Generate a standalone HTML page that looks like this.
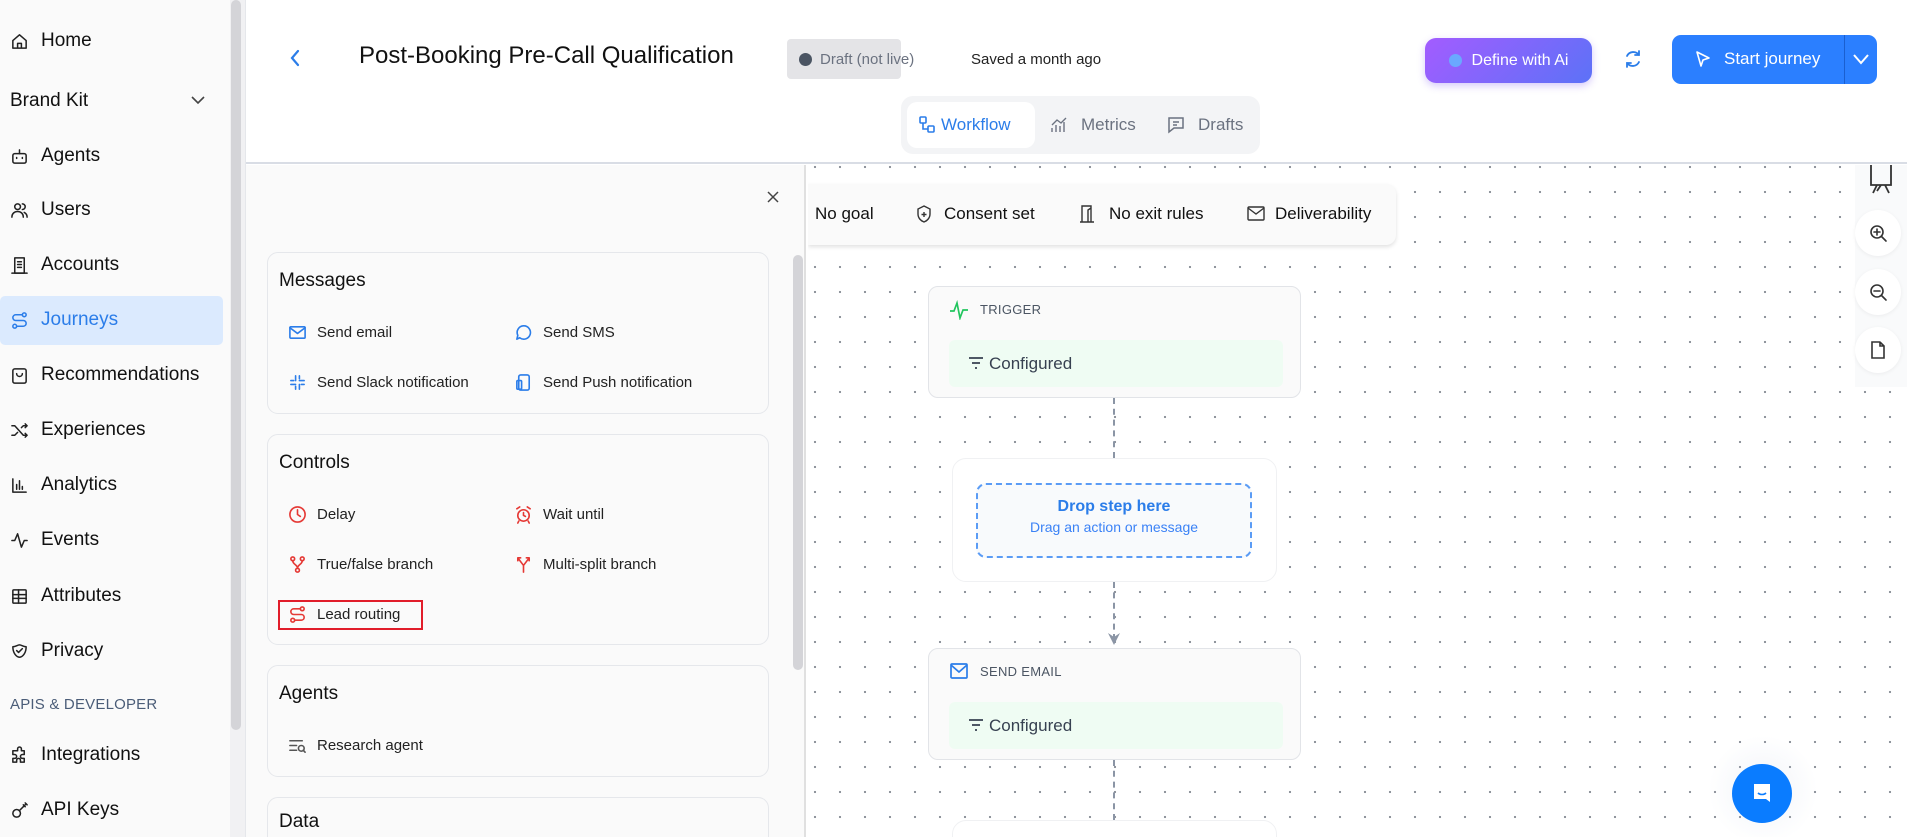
<!DOCTYPE html>
<html><head><meta charset="utf-8">
<style>
*{box-sizing:border-box;margin:0;padding:0}
html{width:1907px;height:837px;overflow:hidden}
body{width:1907px;height:837px;overflow:hidden;position:relative;font-family:"Liberation Sans",sans-serif;background:#fff;color:#111}
.abs{position:absolute}
#side{left:0;top:0;width:231px;height:837px;background:#fafafa}
.nav{position:absolute;left:10px;font-size:19px;color:#111;display:flex;align-items:center;gap:12px;height:24px}
.nav svg{width:19px;height:19px;fill:none;stroke:#222;stroke-width:1.6;stroke-linecap:round;stroke-linejoin:round}
#sb{left:231px;top:0;width:10px;height:730px;background:#d4d4d8;border-radius:5px}
#sbtrack{left:230px;top:0;width:16px;height:837px;background:#f1f1f3;border-right:1px solid #e5e7eb}
#header{left:246px;top:0;width:1661px;height:164px;background:#fff;border-bottom:2px solid #d9dde5}
#panel{left:246px;top:165px;width:560px;height:672px;background:#fafafa;border-right:2px solid #e0e0e0;overflow:hidden}
.card{position:absolute;left:21px;width:502px;border:1.5px solid #e5e7eb;border-radius:11px;background:#fafafa}
.card h3{position:absolute;left:11px;font-size:19px;font-weight:500;color:#111}
.it{position:absolute;font-size:15px;color:#222;display:flex;align-items:center;gap:10px;white-space:nowrap}
.it svg{width:19px;height:19px;fill:none;stroke-width:1.7;stroke-linecap:round;stroke-linejoin:round}
#canvas{left:808px;top:165px;width:1099px;height:672px;overflow:hidden;background-color:#fff;background-image:radial-gradient(circle,#8a8f98 1px,transparent 1.3px);background-size:25px 25px;background-position:-5.5px 14.5px}
.node{position:absolute;left:120px;width:373px;height:112px;background:#fafafa;border:1.5px solid #e2e4e8;border-radius:10px}
.node .lbl{position:absolute;left:51px;top:15px;font-size:13px;color:#4b5563;letter-spacing:.3px}
.node .cfg{position:absolute;left:20px;top:53px;width:334px;height:47px;background:#effcf3;border-radius:6px;font-size:17px;color:#374151;display:flex;align-items:center;padding-left:40px}
.dash{position:absolute;left:305px;width:0;border-left:2px dashed #8b95a5}
.rc{position:absolute;left:1047px;width:46px;height:46px;border-radius:50%;background:#fff;box-shadow:0 1px 4px rgba(0,0,0,.06);display:flex;align-items:center;justify-content:center}
.rc svg{width:20px;height:20px;fill:none;stroke:#333;stroke-width:1.6;stroke-linecap:round}
</style></head><body>

<div id="side" class="abs">
  <div class="nav" style="top:29px"><svg viewBox="0 0 20 20"><path d="M3 9l7-6 7 6v8H3z M8 17v-5h4v5"/></svg>Home</div>
  <div class="nav" style="top:89px;left:10px;font-weight:500">Brand Kit</div>
  <svg class="abs" style="left:190px;top:94px" width="16" height="12" viewBox="0 0 16 12"><path d="M2 3l6 6 6-6" fill="none" stroke="#444" stroke-width="1.6"/></svg>
  <div class="nav" style="top:144px"><svg viewBox="0 0 20 20"><rect x="3" y="7" width="14" height="10" rx="2"/><path d="M10 3v4 M7 11v1 M13 11v1"/></svg>Agents</div>
  <div class="nav" style="top:198px"><svg viewBox="0 0 20 20"><circle cx="8" cy="6" r="3"/><path d="M2 17c0-4 3-6 6-6s6 2 6 6 M13 3a3 3 0 010 6 M15 12c2 1 3 3 3 5"/></svg>Users</div>
  <div class="nav" style="top:253px"><svg viewBox="0 0 20 20"><rect x="5" y="2" width="10" height="16"/><path d="M2 18h16 M8 6h4 M8 9h4 M8 12h4"/></svg>Accounts</div>
  <div class="abs" style="left:0;top:296px;width:223px;height:49px;background:#dbeafe;border-radius:5px"></div>
  <div class="nav" style="top:308px;color:#2b7de9"><svg viewBox="0 0 20 20" style="stroke:#2b7de9"><circle cx="15" cy="4" r="2"/><circle cx="5" cy="16" r="2"/><path d="M13 4H6a3 3 0 000 6h8a3 3 0 010 6H7"/></svg>Journeys</div>
  <div class="nav" style="top:363px"><svg viewBox="0 0 20 20"><rect x="3" y="3" width="14" height="15" rx="2"/><path d="M7 8c0 4 6 4 6 0"/></svg>Recommendations</div>
  <div class="nav" style="top:418px"><svg viewBox="0 0 20 20"><path d="M2 5h3l9 10h4 M2 15h3l3-3 M12 7l2-2h4 M16 3l2 2-2 2 M16 13l2 2-2 2"/></svg>Experiences</div>
  <div class="nav" style="top:473px"><svg viewBox="0 0 20 20"><path d="M3 3v14h14 M7 14V9 M10 14V5 M13 14v-3"/></svg>Analytics</div>
  <div class="nav" style="top:528px"><svg viewBox="0 0 20 20"><path d="M2 10h3l3-7 4 14 3-7h3"/></svg>Events</div>
  <div class="nav" style="top:584px"><svg viewBox="0 0 20 20"><rect x="3" y="3" width="14" height="14" rx="1"/><path d="M3 8h14 M3 12h14 M9 3v14"/></svg>Attributes</div>
  <div class="nav" style="top:639px"><svg viewBox="0 0 20 20"><path d="M3 5c3 0 5-2 7-2s4 2 7 2c0 7-4 11-7 11S3 12 3 5z M7 9l2 2 4-4"/></svg>Privacy</div>
  <div class="abs" style="left:10px;top:696px;font-size:15px;color:#4b5d78;letter-spacing:.2px">APIS &amp; DEVELOPER</div>
  <div class="nav" style="top:743px"><svg viewBox="0 0 20 20"><path d="M8 3a2 2 0 014 0v2h3v4h-2a2 2 0 000 4h2v4h-4v-2a2 2 0 00-4 0v2H3v-4h2a2 2 0 000-4H3V5h5z"/></svg>Integrations</div>
  <div class="nav" style="top:798px"><svg viewBox="0 0 20 20"><circle cx="7" cy="13" r="4"/><path d="M10 10l6-6 M14 4l2 2 M16 2l2 2"/></svg>API Keys</div>
</div>
<div id="sbtrack" class="abs"></div>
<div id="sb" class="abs"></div>

<div id="header" class="abs">
  <svg class="abs" style="left:42px;top:48px" width="14" height="20" viewBox="0 0 14 20"><path d="M10 3L4 10l6 7" fill="none" stroke="#2b7de9" stroke-width="2.2" stroke-linecap="round"/></svg>
  <div class="abs" style="left:113px;top:42px;font-size:24px;font-weight:500;color:#111;white-space:nowrap">Post-Booking Pre-Call Qualification</div>
  <div class="abs" style="left:541px;top:39px;width:114px;height:40px;background:#e4e4e7;border-radius:4px;display:flex;align-items:center;padding-left:12px;gap:8px;font-size:15px;color:#6b7280;white-space:nowrap"><span style="width:13px;height:13px;border-radius:50%;background:#4b5563;display:inline-block;flex:none"></span>Draft (not live)</div>
  <div class="abs" style="left:725px;top:51px;font-size:15px;color:#222;white-space:nowrap">Saved a month ago</div>
  <div class="abs" style="left:1179px;top:38px;width:167px;height:45px;border-radius:11px;background:linear-gradient(135deg,#a35cff,#5c72f7);box-shadow:0 3px 8px rgba(120,80,240,.3);display:flex;align-items:center;justify-content:center;gap:10px;color:#fff;font-size:16px;font-weight:500;white-space:nowrap"><span style="width:13px;height:13px;border-radius:50%;background:#6aa8ff;display:inline-block"></span>Define with Ai</div>
  <svg class="abs" style="left:1377px;top:48px" width="20" height="22" viewBox="0 0 20 22"><path d="M16 7a7 7 0 00-12 1 M4 15a7 7 0 0012-1 M16 3v4h-4 M4 19v-4h4" fill="none" stroke="#2b7de9" stroke-width="1.8" stroke-linecap="round"/></svg>
  <div class="abs" style="left:1426px;top:35px;width:205px;height:49px;border-radius:9px;background:#2b7fff;color:#fff;font-size:17px;font-weight:500">
    <svg class="abs" style="left:22px;top:15px" width="18" height="19" viewBox="0 0 18 19"><path d="M3 2l12 6-6 2-2 6z" fill="none" stroke="#fff" stroke-width="1.6" stroke-linejoin="round"/></svg>
    <span class="abs" style="left:52px;top:14px;white-space:nowrap">Start journey</span>
    <div class="abs" style="left:172px;top:0;width:1px;height:49px;background:#1a5fd0"></div>
    <svg class="abs" style="left:180px;top:18px" width="18" height="13" viewBox="0 0 18 13"><path d="M2 2l7 8 7-8" fill="none" stroke="#fff" stroke-width="2"/></svg>
  </div>
  <div class="abs" style="left:655px;top:96px;width:359px;height:58px;background:#f3f4f6;border-radius:12px"></div>
  <div class="abs" style="left:661px;top:102px;width:128px;height:46px;background:#fff;border-radius:10px"></div>
  <svg class="abs" style="left:672px;top:115px" width="18" height="20" viewBox="0 0 18 20"><rect x="2" y="2" width="6" height="6" rx="1" fill="none" stroke="#2b7de9" stroke-width="1.6"/><rect x="10" y="11" width="6" height="6" rx="1" fill="none" stroke="#2b7de9" stroke-width="1.6"/><path d="M5 8v6h5" fill="none" stroke="#2b7de9" stroke-width="1.6"/></svg>
  <div class="abs" style="left:695px;top:115px;font-size:17px;color:#2b7de9">Workflow</div>
  <svg class="abs" style="left:804px;top:116px" width="18" height="18" viewBox="0 0 18 18"><path d="M2 16V12 M6 16V9 M10 16V10 M14 16V6 M2 9l5-5 4 3 5-5" fill="none" stroke="#6b7280" stroke-width="1.4"/></svg>
  <div class="abs" style="left:835px;top:115px;font-size:17px;color:#6b7280">Metrics</div>
  <svg class="abs" style="left:921px;top:116px" width="18" height="18" viewBox="0 0 18 18"><path d="M2 2h14v10H7l-5 4z M6 6h6 M6 9h4" fill="none" stroke="#6b7280" stroke-width="1.5"/></svg>
  <div class="abs" style="left:952px;top:115px;font-size:17px;color:#6b7280">Drafts</div>
</div>

<div id="panel" class="abs">
  <svg class="abs" style="left:520px;top:25px" width="14" height="14" viewBox="0 0 14 14"><path d="M2 2l10 10M12 2L2 12" stroke="#444" stroke-width="1.5"/></svg>
  <div class="abs" style="left:547px;top:90px;width:10px;height:415px;background:#d4d4d8;border-radius:5px"></div>
  <div class="card" style="top:87px;height:162px"><h3 style="top:17px">Messages</h3>
    <div class="it" style="left:20px;top:70px"><svg viewBox="0 0 20 20" stroke="#2b7de9"><rect x="2" y="4" width="16" height="12" rx="1"/><path d="M2 5l8 6 8-6"/></svg>Send email</div>
    <div class="it" style="left:246px;top:70px"><svg viewBox="0 0 20 20" stroke="#2b7de9"><path d="M10 3a7 7 0 11-4 12.5L3 17l1-4A7 7 0 0110 3z"/></svg>Send SMS</div>
    <div class="it" style="left:20px;top:120px"><svg viewBox="0 0 20 20" stroke="#2b7de9" stroke-width="2.4"><path d="M8 3v5 M12 12v5 M3 12h5 M12 8h5 M12 3v3 M8 14v3 M3 8h3 M14 12h3"/></svg>Send Slack notification</div>
    <div class="it" style="left:246px;top:120px"><svg viewBox="0 0 20 20" stroke="#2b7de9"><rect x="5" y="2" width="11" height="16" rx="2"/><rect x="3" y="8" width="5" height="9" rx="1"/></svg>Send Push notification</div>
  </div>
  <div class="card" style="top:269px;height:211px"><h3 style="top:17px">Controls</h3>
    <div class="it" style="left:20px;top:70px"><svg viewBox="0 0 20 20" stroke="#e53935"><circle cx="10" cy="10" r="8"/><path d="M10 5v5l3 2"/></svg>Delay</div>
    <div class="it" style="left:246px;top:70px"><svg viewBox="0 0 20 20" stroke="#e53935"><circle cx="10" cy="11" r="6"/><path d="M10 8v3l2 1 M3 4l3-2 M17 4l-3-2 M5 17l-1 2 M15 17l1 2"/></svg>Wait until</div>
    <div class="it" style="left:20px;top:120px"><svg viewBox="0 0 20 20" stroke="#e53935"><circle cx="5" cy="4" r="2"/><circle cx="15" cy="4" r="2"/><circle cx="10" cy="16" r="2"/><path d="M5 6c0 4 5 4 5 8 M15 6c0 4-5 4-5 8"/></svg>True/false branch</div>
    <div class="it" style="left:246px;top:120px"><svg viewBox="0 0 20 20" stroke="#e53935"><path d="M10 18v-7L4 3 M10 11l6-8 M4 3h3 M4 3v3 M16 3h-3 M16 3v3"/></svg>Multi-split branch</div>
    <div class="abs" style="left:10px;top:165px;width:145px;height:30px;border:2px solid #e11d2a"></div>
    <div class="it" style="left:20px;top:170px"><svg viewBox="0 0 20 20" stroke="#e53935"><circle cx="15" cy="4" r="2"/><circle cx="5" cy="16" r="2"/><path d="M13 4H6a3 3 0 000 6h8a3 3 0 010 6H7"/></svg>Lead routing</div>
  </div>
  <div class="card" style="top:500px;height:112px"><h3 style="top:17px">Agents</h3>
    <div class="it" style="left:20px;top:70px"><svg viewBox="0 0 20 20" stroke="#555"><path d="M2 5h13 M2 10h7 M2 15h7"/><circle cx="14" cy="13" r="3"/><path d="M16 15l2 2"/></svg>Research agent</div>
  </div>
  <div class="card" style="top:632px;height:60px"><h3 style="top:13px">Data</h3></div>
</div>

<div id="canvas" class="abs">
  <div class="abs" style="left:0;top:19px;width:588px;height:61px;background:#fafafa;border-radius:0 10px 10px 0;box-shadow:0 2px 4px rgba(0,0,0,.12);font-size:17px;color:#111;white-space:nowrap">
    <span class="abs" style="left:7px;top:20px">No goal</span>
    <svg class="abs" style="left:108px;top:20px" width="16" height="20" viewBox="0 0 16 20"><path d="M8 2l6 3v5c0 4-3 7-6 8-3-1-6-4-6-8V5z M8 8v5 M5.5 10.5h5" fill="none" stroke="#333" stroke-width="1.4"/></svg>
    <span class="abs" style="left:136px;top:20px">Consent set</span>
    <svg class="abs" style="left:270px;top:20px" width="18" height="20" viewBox="0 0 18 20"><path d="M4 18V2h9v16 M2 18h14 M10 9v2 M13 4l-3 2v12" fill="none" stroke="#333" stroke-width="1.4"/></svg>
    <span class="abs" style="left:301px;top:20px">No exit rules</span>
    <svg class="abs" style="left:438px;top:21px" width="20" height="18" viewBox="0 0 20 18"><rect x="2" y="2" width="16" height="13" rx="1" fill="none" stroke="#333" stroke-width="1.4"/><path d="M2 3l8 6 8-6" fill="none" stroke="#333" stroke-width="1.4"/></svg>
    <span class="abs" style="left:467px;top:20px">Deliverability</span>
  </div>
  <div class="abs" style="left:1047px;top:0;width:52px;height:222px;background:#f9fafb"></div>
  <svg class="abs" style="left:1060px;top:0" width="26" height="30" viewBox="0 0 26 30"><path d="M3 0v20h20V0 M9 20l-4 8 M17 20l4 8 M13 20l-4 6" fill="none" stroke="#333" stroke-width="1.8"/></svg>
  <div class="rc" style="top:45px"><svg viewBox="0 0 20 20"><circle cx="9" cy="9" r="6"/><path d="M13.5 13.5L18 18 M9 6v6 M6 9h6"/></svg></div>
  <div class="rc" style="top:104px"><svg viewBox="0 0 20 20"><circle cx="9" cy="9" r="6"/><path d="M13.5 13.5L18 18 M6 9h6"/></svg></div>
  <div class="rc" style="top:162px"><svg viewBox="0 0 20 20"><path d="M4 2h8l4 4v12H4z M12 2v4h4"/></svg></div>

  <div class="node" style="top:121px">
    <svg class="abs" style="left:20px;top:13px" width="20" height="20" viewBox="0 0 20 20"><path d="M1 11h4l3-8 3 15 3-8h5" fill="none" stroke="#22c55e" stroke-width="1.7"/></svg>
    <div class="lbl">TRIGGER</div>
    <div class="cfg"><svg class="abs" style="left:19px;top:16px" width="16" height="14" viewBox="0 0 16 14"><path d="M1 2h14 M4 7h8 M7 12h2" stroke="#374151" stroke-width="1.7"/></svg>Configured</div>
  </div>
  <div class="dash" style="top:233px;height:60px"></div>
  <div class="abs" style="left:144px;top:293px;width:325px;height:124px;background:#fff;border:1.5px solid #f0f1f3;border-radius:14px"></div>
  <div class="abs" style="left:168px;top:318px;width:276px;height:75px;background:#f8fafc;border:2px dashed #5b9cf5;border-radius:10px;text-align:center">
    <div style="margin-top:13px;font-size:16px;font-weight:700;color:#2b7de9">Drop step here</div>
    <div style="margin-top:3px;font-size:14px;color:#3b82f6">Drag an action or message</div>
  </div>
  <div class="dash" style="top:417px;height:58px"></div>
  <svg class="abs" style="left:299px;top:467px" width="14" height="14" viewBox="0 0 14 14"><path d="M1 1l6 12 6-12-6 4z" fill="#8b95a5"/></svg>
  <div class="node" style="top:483px">
    <svg class="abs" style="left:20px;top:12px" width="20" height="20" viewBox="0 0 20 20"><rect x="2" y="3" width="16" height="14" rx="1" fill="none" stroke="#2b7de9" stroke-width="1.7"/><path d="M2 4l8 7 8-7" fill="none" stroke="#2b7de9" stroke-width="1.7"/></svg>
    <div class="lbl">SEND EMAIL</div>
    <div class="cfg"><svg class="abs" style="left:19px;top:16px" width="16" height="14" viewBox="0 0 16 14"><path d="M1 2h14 M4 7h8 M7 12h2" stroke="#374151" stroke-width="1.7"/></svg>Configured</div>
  </div>
  <div class="dash" style="top:595px;height:60px"></div>
  <div class="abs" style="left:144px;top:655px;width:325px;height:30px;background:#fff;border:1.5px solid #f0f1f3;border-radius:14px"></div>
  <div class="abs" style="left:900px;top:570px;width:110px;height:110px;border-radius:50%;background:radial-gradient(circle,rgba(200,210,230,.25),rgba(255,255,255,0) 70%)"></div>
  <div class="abs" style="left:924px;top:599px;width:60px;height:59px;border-radius:50%;background:#0a7cff"></div>
  <svg class="abs" style="left:943px;top:617px" width="22" height="24" viewBox="0 0 22 24"><path d="M3 2h16v18l-4-3H3z" fill="#fff"/><path d="M7 11c2 2 6 2 8 0" fill="none" stroke="#0a7cff" stroke-width="1.6"/></svg>
</div>
</body></html>
